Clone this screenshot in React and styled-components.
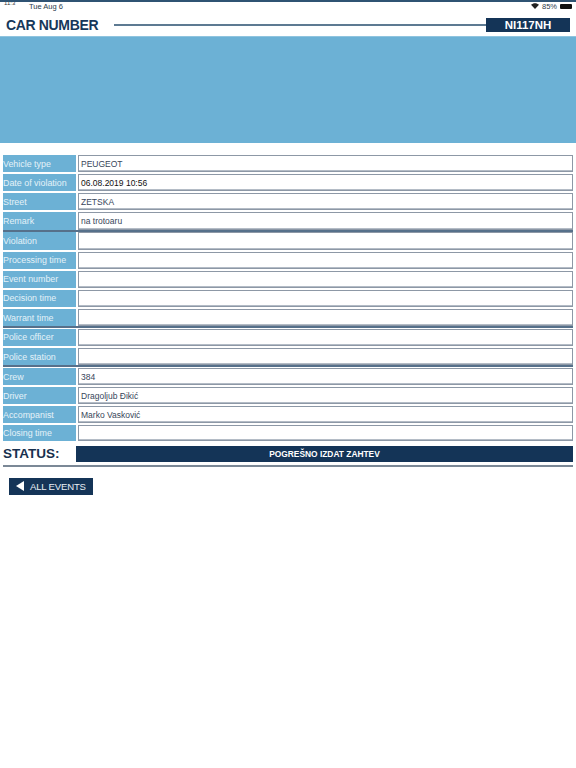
import React from "react";
import styled, { createGlobalStyle } from "styled-components";

const Global = createGlobalStyle`
  *, *::before, *::after { box-sizing: border-box; }
  html, body { margin: 0; padding: 0; background: #fff; }
  body { font-family: "Liberation Sans", Arial, sans-serif; }
`;
const Page = styled.div`width: 576px; height: 768px; overflow: hidden; background: #fff; border-top: 2px solid #2f5373;`;
const StatusBar = styled.div`height: 8px; display: flex; align-items: center; padding: 0 3px 0 29px; font-size: 7.5px; color: #2a3a4a; position: relative;`;
const Clock = styled.span`position: absolute; left: 4px; top: -2px; font-size: 6px; color: #333;`;
const StatusRight = styled.div`margin-left: auto; display: flex; align-items: center; gap: 3px;`;
const Battery = styled.span`width: 12px; height: 5px; background: #111; border-radius: 1px; margin-right: 1px;`;
const Header = styled.header`height: 26px; display: flex; align-items: center; padding: 3px 6px 0;`;
const Title = styled.h1`margin: 0; font-size: 14px; font-weight: 700; color: #17375a; letter-spacing: -0.35px; white-space: nowrap;`;
const Rule = styled.div`flex: 1; height: 2px; background: #5d7a92; margin-left: 16px;`;
const Plate = styled.div`width: 84px; height: 14px; background: #143457; color: #fff; font-size: 11.5px; font-weight: 700; display: flex; align-items: center; justify-content: center;`;
const Banner = styled.div`height: 107px; background: #6cb1d5; border-top: 1px solid #8fc4df;`;
const Table = styled.section`padding: 12px 3px 0;`;
const Group = styled.div`display: flex; flex-direction: column; gap: 2px; margin-bottom: ${p => p.$last ? "0" : "0.75px"}; border-bottom: ${p => p.$last ? "none" : "2px solid #56708a"};`;
const Row = styled.div`display: grid; grid-template-columns: 73px 495px; column-gap: 2px; height: ${p => p.$short ? "15.5px" : "17.17px"};`;
const Label = styled.div`background: #6cb1d5; color: #e4f1f8; font-size: 8.9px; display: flex; align-items: center; white-space: nowrap;`;
const Value = styled.div`border: 1px solid #8d98a6; box-shadow: inset 0 -1px 0 #b4bcc6; padding-left: 2px; color: ${p => p.$dark ? "#111" : "#37465a"}; font-size: 8.5px; display: flex; align-items: center; background: #fff;`;
const StatusRow = styled.div`display: flex; align-items: center; height: 21px; margin-top: 5px; padding-bottom: 3px; border-bottom: 2px solid #7b8896;`;
const StatusLabel = styled.div`width: 73px; font-size: 13.5px; font-weight: 700; color: #17304e;`;
const StatusValue = styled.div`flex: 1; height: 16px; background: #143457; color: #fff; font-size: 8.4px; font-weight: 700; display: flex; align-items: center; justify-content: center;`;
const BackButton = styled.button`margin: 11px 0 0 6px; width: 84px; height: 17px; border: 0; padding: 0 0 0 7px; background: #143457; color: #e9eff5; font: 9.6px "Liberation Sans", Arial, sans-serif; letter-spacing: -0.2px; white-space: nowrap; display: flex; align-items: center; gap: 6px;`;

const groups = [
  [["Vehicle type", "PEUGEOT"], ["Date of violation", "06.08.2019 10:56", true], ["Street", "ZETSKA"], ["Remark", "na trotoaru"]],
  [["Violation"], ["Processing time"], ["Event number"], ["Decision time"], ["Warrant time"]],
  [["Police officer"], ["Police station"]],
  [["Crew", "384"], ["Driver", "Dragoljub Đikić"], ["Accompanist", "Marko Vasković"], ["Closing time"]],
];

export default function App() {
  return (
    <Page>
      <Global />
      <StatusBar>
        <Clock>11:3</Clock>
        <span>Tue Aug 6</span>
        <StatusRight>
          <svg width="8" height="6" viewBox="0 0 16 12" aria-hidden="true"><path d="M8 12 0 3.500C4.500-.8 11.500-.8 16 3.500Z" fill="#222" /></svg>
          <span>85%</span>
          <Battery />
        </StatusRight>
      </StatusBar>
      <Header>
        <Title>CAR NUMBER</Title>
        <Rule />
        <Plate>NI117NH</Plate>
      </Header>
      <Banner />
      <Table>
        {groups.map((g, i) => (
          <Group key={i} $last={i === groups.length - 1}>
            {g.map(([label, value, dark]) => (
              <Row key={label} $short={label === "Closing time"}>
                <Label>{label}</Label>
                <Value $dark={dark}>{value}</Value>
              </Row>
            ))}
          </Group>
        ))}
        <StatusRow>
          <StatusLabel>STATUS:</StatusLabel>
          <StatusValue>POGREŠNO IZDAT ZAHTEV</StatusValue>
        </StatusRow>
        <BackButton>
          <svg width="8" height="10" viewBox="0 0 8 10" aria-hidden="true"><path d="M8 0v10L0 5Z" fill="#fff" /></svg>
          ALL EVENTS
        </BackButton>
      </Table>
    </Page>
  );
}
